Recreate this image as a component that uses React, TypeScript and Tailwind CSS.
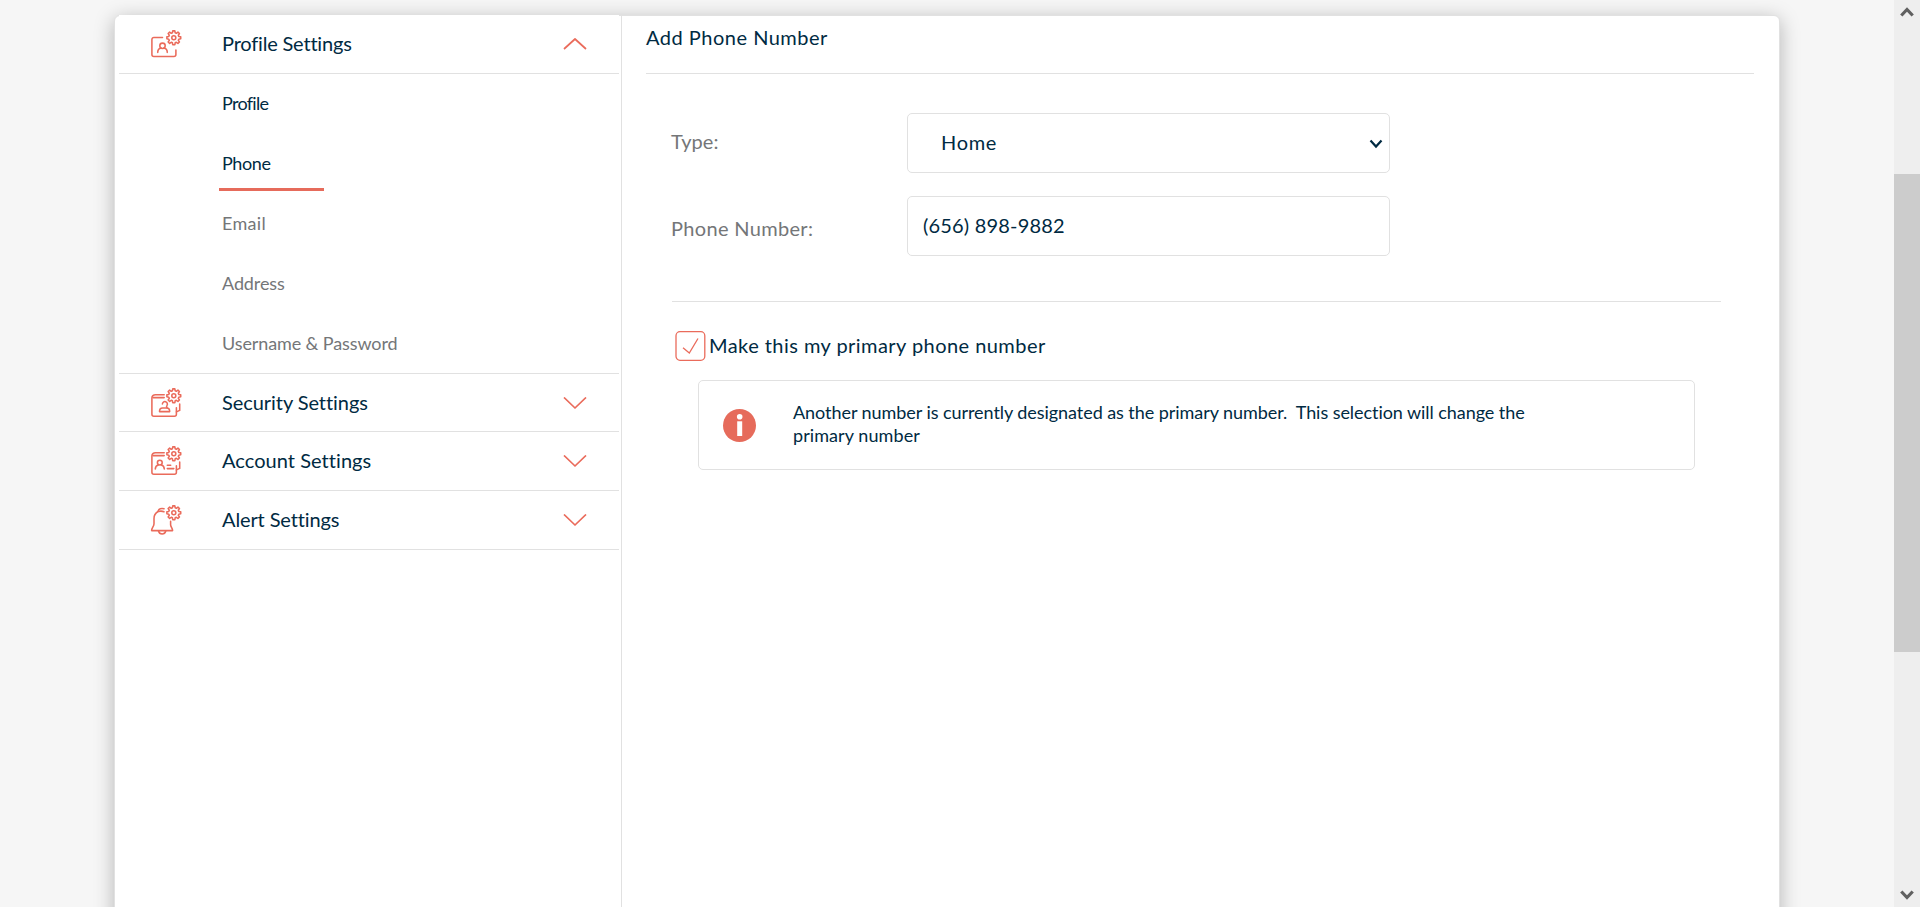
import React from "react";

function gearPath(cx: number, cy: number) {
  const points: string[] = [];
  for (let i = 0; i < 8; i++) {
    const base = (i * Math.PI) / 4 - Math.PI / 2;
    const corners: [number, number][] = [
      [-0.27, 5.2],
      [-0.15, 7],
      [0.15, 7],
      [0.27, 5.2],
    ];
    for (const [offset, radius] of corners) {
      const x = cx + radius * Math.cos(base + offset);
      const y = cy + radius * Math.sin(base + offset);
      points.push(`${x.toFixed(2)} ${y.toFixed(2)}`);
    }
  }
  return `M${points.join("L")}Z`;
}

function IconFrame({ className = "", children }: { className?: string; children: React.ReactNode }) {
  return (
    <svg
      className={`ml-[31px] h-[34px] w-8 shrink-0 ${className}`}
      viewBox="0 0 32 34"
      fill="none"
      stroke="#ea6b5b"
      strokeWidth="1.55"
      strokeLinecap="round"
      strokeLinejoin="round"
    >
      <path d={gearPath(23.8, 10.8)} />
      <circle cx="23.8" cy="10.8" r="2" />
      {children}
    </svg>
  );
}

function ProfileIcon() {
  return (
    <IconFrame>
      <path d="M12.5 10.500H3.900a2 2 0 0 0-2 2V27.500a2 2 0 0 0 2 2h20a2 2 0 0 0 2-2V23" />
      <circle cx="12.500" cy="18.800" r="2.700" />
      <path d="M7.700 25.400c.1-2.400 1.500-4 3.500-4.300M17.300 25.400c-.1-2.400-1.500-4-3.500-4.300" />
    </IconFrame>
  );
}

function FolderOutline() {
  return (
    <>
      <path d="M14.200 9.700H5.500C3.300 9.700 1.900 11 1.900 13v16.200a2 2 0 0 0 2 2h20.500a2 2 0 0 0 2-2v-6.500" />
      <path d="M3 12.600h11.200M29.700 19v6.400l-3.300 1.500" />
    </>
  );
}

function SecurityIcon() {
  return (
    <IconFrame className="mb-px">
      <FolderOutline />
      <path d="M9.500 26.600h10.200c0-2.200-1.200-3.600-3-3.600h-4.200c-1.800 0-3 1.400-3 3.600z" />
      <path d="M12.400 19a2.500 2.500 0 1 1 4.600 1.400c-.6.800-.6 1.500 0 2.400" />
    </IconFrame>
  );
}

function AccountIcon() {
  return (
    <IconFrame className="mb-0.5">
      <FolderOutline />
      <circle cx="9.800" cy="19.600" r="2.400" />
      <path d="M5.300 26c.1-2.300 1.300-3.700 3.100-4.100M14.300 26c-.1-2.300-1.300-3.700-3.100-4.100M17.300 22.300h3.400M17.300 25.600h6.500" />
    </IconFrame>
  );
}

function AlertIcon() {
  return (
    <IconFrame className="mb-[3px]">
      <path d="M14 6.800c-2.300-.7-5.500-.3-6 2.700C5.400 11 4 13.300 4 16.500v5.200c0 2.900-2.400 4-2.400 6.900h21c0-2.300-1.800-3.300-2-5.700v-3.700" />
      <path d="M14 9.700c-2-.8-3.900-.7-6-.2M8.500 29c.5 2 1.800 3 3.600 3s3.200-1 3.700-3" />
    </IconFrame>
  );
}

function Caret({ up = false }: { up?: boolean }) {
  return (
    <svg
      className="mr-8 ml-auto h-3 w-6 shrink-0"
      viewBox="0 0 24 12"
      fill="none"
      stroke="#ea6b5b"
      strokeWidth="1.7"
      strokeLinejoin="round"
    >
      <path d={up ? "M1 11 12 1 23 11" : "M1 0.500 12 11 23 0.500"} />
    </svg>
  );
}

type SectionProps = {
  icon: React.ReactNode;
  label: string;
  labelClass: string;
  rowClass: string;
  open?: boolean;
};

function SectionRow({ icon, label, labelClass, rowClass, open }: SectionProps) {
  return (
    <div className={`flex items-center border-b border-[#e1e1e1] ${rowClass}`}>
      {icon}
      <span className={`mb-0.5 ml-10 text-[20px] leading-6 whitespace-nowrap ${labelClass}`}>{label}</span>
      <Caret up={open} />
    </div>
  );
}

const links = [
  { label: "Profile", className: "tracking-[-0.7px]" },
  { label: "Phone", className: "tracking-[-0.4px]", current: true },
  { label: "Email", className: "tracking-[0.3px] text-[#747678]" },
  { label: "Address", className: "tracking-[-0.1px] text-[#747678]" },
  { label: "Username & Password", className: "tracking-[-0.11px] text-[#747678]" },
];

function Sidebar() {
  return (
    <nav className="w-[507px] shrink-0 border-r border-[#e1e1e1] pl-1">
      <div className="-mt-px w-[500px] bg-white">
        <SectionRow icon={<ProfileIcon />} label="Profile Settings" labelClass="tracking-[-0.19px]" rowClass="h-[59px]" open />
        <ul className="h-[300px] border-b border-[#e1e1e1]">
          {links.map((link) => (
            <li key={link.label} className="ml-[100px] h-[60px] w-[300px] pt-[18px]">
              <a className={`block pl-[3px] text-[18px] leading-[22px] whitespace-nowrap ${link.className}`}>{link.label}</a>
              {link.current && <div className="mt-3.5 h-[3px] w-[105px] bg-[#e66b5b]" />}
            </li>
          ))}
        </ul>
        <SectionRow icon={<SecurityIcon />} label="Security Settings" labelClass="tracking-[-0.06px]" rowClass="h-[58px]" />
        <SectionRow icon={<AccountIcon />} label="Account Settings" labelClass="tracking-[0.05px]" rowClass="h-[59px]" />
        <SectionRow icon={<AlertIcon />} label="Alert Settings" labelClass="tracking-[-0.12px]" rowClass="h-[59px]" />
      </div>
    </nav>
  );
}

function PhoneForm() {
  return (
    <section className="flex-1 pl-6">
      <h1 className="h-[58px] w-[1108px] border-b border-[#e1e1e1] pt-[9px] text-[20px] leading-6 tracking-[0.5px]">
        Add Phone Number
      </h1>
      <div className="mt-[39px] ml-[26px] w-[1049px] text-[20px] leading-6">
        <div className="flex h-[60px]">
          <label className="-ml-px w-[236px] pt-4 tracking-[0.08px] text-[#747678]">Type:</label>
          <div className="flex h-[60px] w-[483px] items-center rounded-[5px] border border-[#e1e1e1] pr-1.5 pl-[33px]">
            <span className="mb-0.5 tracking-[0.7px]">Home</span>
            <svg className="ml-auto h-3 w-3.5" viewBox="0 0 14 12" fill="none" stroke="#002a42" strokeWidth="2.2">
              <path d="M1.500 3.500 7 9.500 12.500 3.500" />
            </svg>
          </div>
        </div>
        <div className="mt-[23px] flex h-[60px]">
          <label className="-ml-px w-[236px] pt-5 tracking-[0.33px] text-[#747678]">Phone Number:</label>
          <div className="h-[60px] w-[483px] rounded-[5px] border border-[#e1e1e1] pt-4 pl-[15px] tracking-[0.18px]">
            (656) 898-9882
          </div>
        </div>
        <hr className="mt-[45px] border-t border-[#e1e1e1]" />
        <div className="mt-[29px] ml-[3px] flex h-[30px]">
          <svg className="h-[30px] w-[31px]" viewBox="0 0 31 30" fill="none" stroke="#ea6b5b" strokeWidth="1.3">
            <rect x="1" y="0.7" width="28.8" height="28.6" rx="4" />
            <path d="M8 16.800 14.300 22 23 7.500" />
          </svg>
          <span className="mt-0.5 ml-[3px] tracking-[0.45px] whitespace-nowrap">Make this my primary phone number</span>
        </div>
        <div className="mt-[19px] ml-[26px] flex h-[90px] w-[997px] items-center rounded-[5px] border border-[#e1e1e1] pl-6">
          <svg className="h-[33px] w-[33px]" viewBox="0 0 33 33">
            <circle cx="16.500" cy="16.500" r="16.500" fill="#e66b5b" />
            <circle cx="16.700" cy="7.700" r="2.800" fill="#ffffff" />
            <rect x="14.200" y="12.300" width="5" height="14.700" fill="#ffffff" />
          </svg>
          <p className="mb-[3px] ml-[37px] text-[18px] leading-[23px] whitespace-pre">
            <span className="tracking-[-0.058px]">
              Another number is currently designated as the primary number.{"  "}This selection will change the
            </span>
            <br />
            <span className="tracking-[0.08px]">primary number</span>
          </p>
        </div>
      </div>
    </section>
  );
}

function Scrollbar() {
  return (
    <aside className="flex w-[26px] shrink-0 flex-col items-center bg-[#eeeeee]">
      <svg className="mt-[5px] h-3.5 w-3.5" viewBox="0 0 14 14" fill="none" stroke="#606060" strokeWidth="3.2">
        <path d="M1.300 10.500 7 4.500 12.700 10.500" />
      </svg>
      <div className="mt-[155px] h-[478px] w-full bg-[#cccccc]" />
      <svg className="mt-auto mb-[5px] h-3.5 w-3.5" viewBox="0 0 14 14" fill="none" stroke="#606060" strokeWidth="3.2">
        <path d="M1.300 3.500 7 9.500 12.700 3.500" />
      </svg>
    </aside>
  );
}

export default function App() {
  return (
    <div className="flex h-[907px] w-[1920px] overflow-hidden bg-[#f6f6f6] font-['Lato',sans-serif] text-[#002a42] [font-variant-ligatures:none]">
      <main className="flex-1 pt-[15px] pl-[114px]">
        <div className="flex h-[960px] w-[1666px] rounded-[6px] border border-[#e1e1e1] bg-white shadow-[0_4px_20px_rgba(0,0,0,0.27)]">
          <Sidebar />
          <PhoneForm />
        </div>
      </main>
      <Scrollbar />
    </div>
  );
}
